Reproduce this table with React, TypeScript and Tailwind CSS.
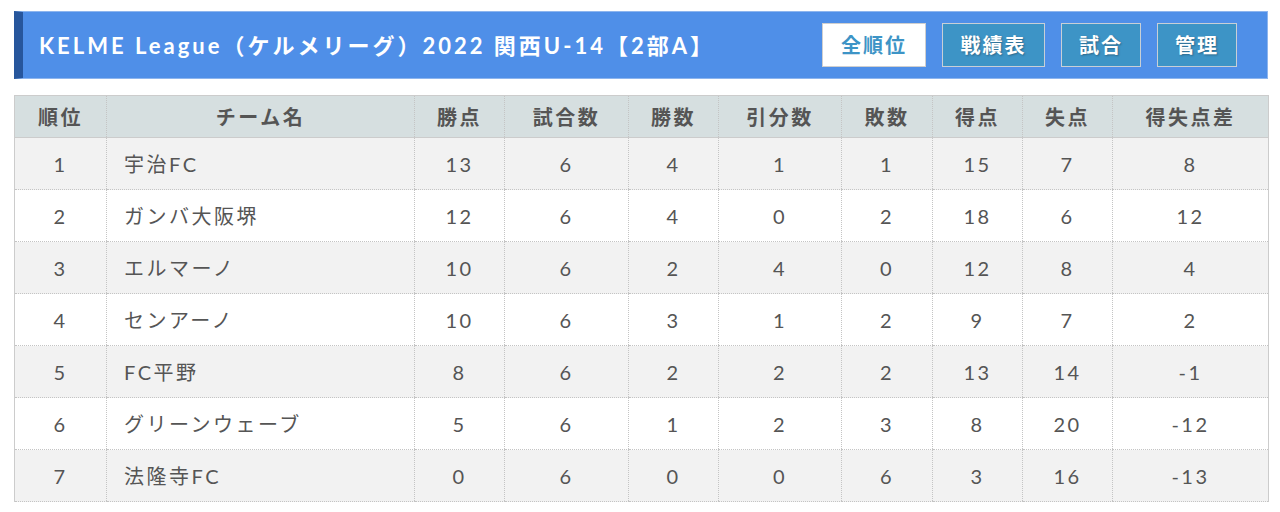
import React from "react";

const rows = [
  ["1", "宇治FC", "13", "6", "4", "1", "1", "15", "7", "8"],
  ["2", "ガンバ大阪堺", "12", "6", "4", "0", "2", "18", "6", "12"],
  ["3", "エルマーノ", "10", "6", "2", "4", "0", "12", "8", "4"],
  ["4", "センアーノ", "10", "6", "3", "1", "2", "9", "7", "2"],
  ["5", "FC平野", "8", "6", "2", "2", "2", "13", "14", "-1"],
  ["6", "グリーンウェーブ", "5", "6", "1", "2", "3", "8", "20", "-12"],
  ["7", "法隆寺FC", "0", "6", "0", "0", "6", "3", "16", "-13"],
];

const heads = ["順位", "チーム名", "勝点", "試合数", "勝数", "引分数", "敗数", "得点", "失点", "得失点差"];
const widths = [92, 308, 90, 124, 90, 123, 91, 90, 90, 156];

export default function App() {
  return (
    <div
      className="w-[1280px] h-[512px] bg-white pl-[14px] pr-[12px] pt-[11px]"
      style={{ fontFamily: 'Lato, "Noto Sans CJK JP", sans-serif' }}
    >
      <div className="flex h-[68px] items-center border border-[#8db5ee] bg-[#4f8fe8] border-l-[9px] border-l-[#27569c] pl-[16px] pr-[30px]">
        <div className="flex-1 whitespace-nowrap text-white text-[22px] font-bold tracking-[3px]">
          KELME League（ケルメリーグ）2022 関西U-14【2部A】
        </div>
        <div className="flex gap-[16px]">
          <div className="w-[104px] h-[44px] flex items-center justify-center bg-white border border-[#cfcfcf] text-[#3d94c6] text-[20px] font-bold tracking-[2px]">
            全順位
          </div>
          <div className="w-[103px] h-[44px] flex items-center justify-center bg-[#3d94c6] border border-[#c8cfd6] text-white text-[20px] font-bold tracking-[2px] [text-shadow:1px_1px_2px_rgba(0,0,0,0.3)]">
            戦績表
          </div>
          <div className="w-[80px] h-[44px] flex items-center justify-center bg-[#3d94c6] border border-[#c8cfd6] text-white text-[20px] font-bold tracking-[2px] [text-shadow:1px_1px_2px_rgba(0,0,0,0.3)]">
            試合
          </div>
          <div className="w-[80px] h-[44px] flex items-center justify-center bg-[#3d94c6] border border-[#c8cfd6] text-white text-[20px] font-bold tracking-[2px] [text-shadow:1px_1px_2px_rgba(0,0,0,0.3)]">
            管理
          </div>
        </div>
      </div>

      <table className="mt-[16px] w-[1254px] border-collapse table-fixed text-[#555]">
        <colgroup>
          {widths.map((w, i) => (
            <col key={i} style={{ width: w }} />
          ))}
        </colgroup>
        <thead>
          <tr className="h-[42px] bg-[#d6dfe0] border border-[#cccccc]">
            {heads.map((h, i) => (
              <th
                key={i}
                className="text-[20px] font-bold text-center border-l border-dotted border-l-[#c4c4c4] first:border-l-0 border-b border-b-solid border-b-[#c8c8c8] tracking-[2.5px]"
              >
                {h}
              </th>
            ))}
          </tr>
        </thead>
        <tbody>
          {rows.map((r, ri) => (
            <tr
              key={ri}
              className={`h-[52px] border-l border-r border-solid border-[#cccccc] ${ri % 2 === 0 ? "bg-[#f2f2f2]" : "bg-white"}`}
            >
              {r.map((c, ci) => (
                <td
                  key={ci}
                  className={`text-[20px] tracking-[2.5px] border-dotted border-[#c4c4c4] border-b ${ci === 0 ? "" : "border-l"} ${ci === 1 ? "text-left pl-[17px]" : "text-center"}`}
                >
                  {c}
                </td>
              ))}
            </tr>
          ))}
        </tbody>
      </table>
    </div>
  );
}
